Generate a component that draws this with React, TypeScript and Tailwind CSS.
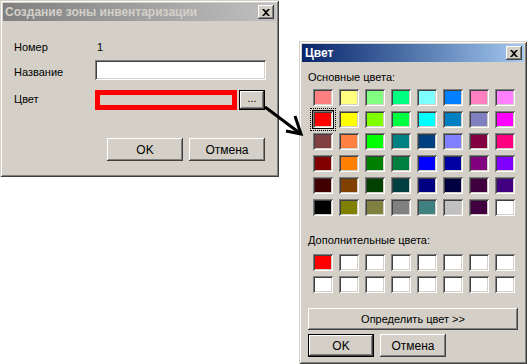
import React from "react";

const FONT = { fontFamily: '"Liberation Sans", Arial, sans-serif' };

const basic = [
  ["#FF8080", "#FFFF80", "#80FF80", "#00FF80", "#80FFFF", "#0080FF", "#FF80C0", "#FF80FF"],
  ["#FF0000", "#FFFF00", "#80FF00", "#00FF40", "#00FFFF", "#0080C0", "#8080C0", "#FF00FF"],
  ["#804040", "#FF8040", "#00FF00", "#008080", "#004080", "#8080FF", "#800040", "#FF0080"],
  ["#800000", "#FF8000", "#008000", "#008040", "#0000FF", "#0000A0", "#800080", "#8000FF"],
  ["#400000", "#804000", "#004000", "#004040", "#000080", "#000040", "#400040", "#400080"],
  ["#000000", "#808000", "#808040", "#808080", "#408080", "#C0C0C0", "#400040", "#FFFFFF"],
];

const custom = [
  ["#FF0000", "#FFFFFF", "#FFFFFF", "#FFFFFF", "#FFFFFF", "#FFFFFF", "#FFFFFF", "#FFFFFF"],
  ["#FFFFFF", "#FFFFFF", "#FFFFFF", "#FFFFFF", "#FFFFFF", "#FFFFFF", "#FFFFFF", "#FFFFFF"],
];

const RAISED =
  "shadow-[inset_-1px_-1px_0_#404040,inset_1px_1px_0_#ffffff,inset_-2px_-2px_0_#808080,inset_2px_2px_0_#d4d0c8]";
const SUNKEN =
  "shadow-[inset_1px_1px_0_#808080,inset_-1px_-1px_0_#ffffff,inset_2px_2px_0_#404040,inset_-2px_-2px_0_#d4d0c8]";
const WINDOW =
  "shadow-[inset_1px_1px_0_#d4d0c8,inset_-1px_-1px_0_#404040,inset_2px_2px_0_#ffffff,inset_-2px_-2px_0_#808080]";

function CloseBtn() {
  return (
    <div className={`w-[16px] h-[14px] bg-[#d4d0c8] flex items-center justify-center ${RAISED}`}>
      <svg width="8" height="7" viewBox="0 0 8 7">
        <path d="M0 0h2l2 2 2-2h2L5 3.5 8 7H6L4 5 2 7H0l3-3.5z" fill="#000" />
      </svg>
    </div>
  );
}

function Swatch({ color, selected }: { color: string; selected?: boolean }) {
  const inner = (
    <div className={`w-[20px] h-[17px] p-[2px] ${SUNKEN}`}>
      <div className="w-full h-full" style={{ backgroundColor: color }} />
    </div>
  );
  if (!selected) return inner;
  return (
    <div className="relative w-[20px] h-[17px]">
      <div className="absolute -left-[3px] -top-[3px] w-[26px] h-[23px] border border-dotted border-black" />
      <div className="absolute -left-[1px] -top-[1px] w-[22px] h-[19px] border border-black" />
      <div className="absolute left-0 top-0">{inner}</div>
    </div>
  );
}

export default function App() {
  return (
    <div className="relative w-[527px] h-[364px] bg-white overflow-hidden text-[11px] text-black" style={FONT}>
      {/* Left dialog */}
      <div className={`absolute left-0 top-0 w-[279px] h-[177px] bg-[#d4d0c8] p-[3px] flex flex-col ${WINDOW}`}>
        <div className="h-[18px] bg-gradient-to-r from-[#808080] to-[#c0c0c0] flex items-center justify-between pl-[2px] pr-[2px]">
          <span className="text-[#d4d0c8] font-bold text-[12px] leading-none">Создание зоны инвентаризации</span>
          <CloseBtn />
        </div>
        <div className="flex flex-col pl-[11px]">
          <div className="flex mt-[20px] h-[13px] items-center">
            <span className="w-[83px]">Номер</span>
            <span>1</span>
          </div>
          <div className="flex mt-[6px] h-[20px]">
            <span className="w-[81px] pt-[6px] leading-[13px]">Название</span>
            <div className={`w-[171px] h-[20px] bg-white ${SUNKEN}`} />
          </div>
          <div className="flex mt-[10px] h-[20px]">
            <span className="w-[81px] pt-[3px] leading-[13px]">Цвет</span>
            <div className="w-[142px] h-[20px] border-[5px] border-[#ff0000] bg-[#d4d0c8]" />
            <div className="ml-[2px] w-[26px] h-[20px] border border-black">
              <div className={`w-full h-full bg-[#d4d0c8] flex items-center justify-center ${RAISED}`}>
                <span className="leading-none -mt-[3px]">...</span>
              </div>
            </div>
          </div>
          <div className="flex mt-[28px] gap-[6px] pl-[93px]">
            <div className={`w-[76px] h-[23px] bg-[#d4d0c8] flex items-center justify-center text-[12px] ${RAISED}`}>OK</div>
            <div className={`w-[76px] h-[23px] bg-[#d4d0c8] flex items-center justify-center text-[12px] ${RAISED}`}>Отмена</div>
          </div>
        </div>
      </div>

      {/* Right dialog */}
      <div className={`absolute left-[299px] top-[41px] w-[228px] h-[323px] bg-[#d4d0c8] p-[3px] flex flex-col ${WINDOW}`}>
        <div className="h-[18px] bg-gradient-to-r from-[#0a246a] to-[#a6caf0] flex items-center justify-between pl-[3px] pr-[2px]">
          <span className="text-white font-bold text-[12px] leading-none">Цвет</span>
          <CloseBtn />
        </div>
        <div className="flex flex-col pl-[6px]">
          <span className="mt-[9px] leading-[13px]">Основные цвета:</span>
          <div className="mt-[5px] ml-[5px] grid grid-cols-[repeat(8,20px)] gap-x-[6px] gap-y-[5px]">
            {basic.map((row, r) =>
              row.map((c, i) => <Swatch key={`${r}-${i}`} color={c} selected={r === 1 && i === 0} />)
            )}
          </div>
          <span className="mt-[18px] leading-[13px]">Дополнительные цвета:</span>
          <div className="mt-[7px] ml-[5px] grid grid-cols-[repeat(8,20px)] gap-x-[6px] gap-y-[5px]">
            {custom.map((row, r) => row.map((c, i) => <Swatch key={`c${r}-${i}`} color={c} />))}
          </div>
          <div className={`mt-[15px] w-[210px] h-[22px] bg-[#d4d0c8] flex items-center justify-center text-[11px] ${RAISED}`}>
            Определить цвет &gt;&gt;
          </div>
          <div className="flex mt-[4px] gap-[6px]">
            <div className="w-[66px] h-[23px] border border-black">
              <div className={`w-full h-full bg-[#d4d0c8] flex items-center justify-center text-[12px] ${RAISED}`}>OK</div>
            </div>
            <div className={`w-[66px] h-[23px] bg-[#d4d0c8] flex items-center justify-center text-[12px] ${RAISED}`}>Отмена</div>
          </div>
        </div>
      </div>

      {/* Arrow */}
      <svg className="absolute left-0 top-0 pointer-events-none" width="527" height="364">
        <path d="M265 107 L301 134" stroke="#000" strokeWidth="3" fill="none" />
        <path d="M295 116 L301 134 L286 131" stroke="#000" strokeWidth="3" fill="none" strokeLinejoin="miter" />
      </svg>
    </div>
  );
}
